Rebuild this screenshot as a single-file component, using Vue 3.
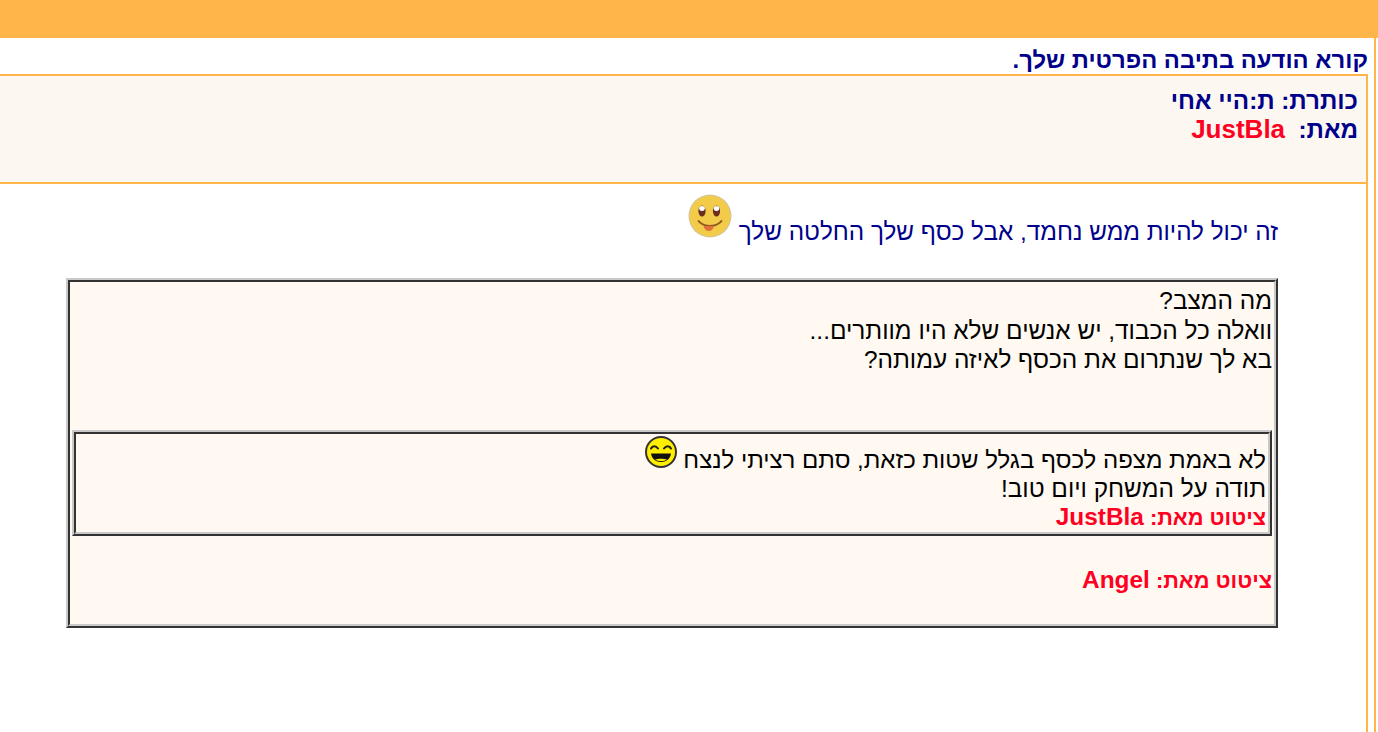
<script setup>
</script>

<template>
  <div class="page" dir="rtl">
    <div class="topbar"></div>
    <div class="outer">
      <h1 class="title">קורא הודעה בתיבה הפרטית שלך.</h1>
      <div class="inner">
        <div class="panel">
          <div class="meta">כותרת: ת:היי אחי</div>
          <div class="meta">מאת:&nbsp; <span class="red">JustBla</span></div>
        </div>
        <div class="content">
          <p class="message">
            זה יכול להיות ממש נחמד, אבל כסף שלך החלטה שלך
            <svg class="smile" width="44" height="44" viewBox="0 0 44 44" aria-hidden="true">
              <defs>
                <filter id="soft" x="-10%" y="-10%" width="120%" height="120%">
                  <feGaussianBlur stdDeviation="0.7" />
                </filter>
              </defs>
              <circle cx="22" cy="22" r="21.500" fill="#cfc6a8" filter="url(#soft)" />
              <circle cx="22" cy="22" r="20.500" fill="#f2cb48" />
              <ellipse cx="14" cy="17" rx="3.600" ry="5.500" fill="#6b2f22" />
              <ellipse cx="28.500" cy="17" rx="3.600" ry="5.500" fill="#6b2f22" />
              <ellipse cx="14" cy="14.500" rx="2.800" ry="2.400" fill="#fff" />
              <ellipse cx="28.500" cy="14.500" rx="2.800" ry="2.400" fill="#fff" />
              <path d="M10.500 27l1.500 1.500c3 2.500 6.500 3.500 10 3.500s7-1 10-3.500l1.500-1.500" fill="none" stroke="#8f5a20" stroke-width="1.800" stroke-linecap="round" />
              <path d="M15.500 32h10.500c-.8 3.500-3 5-5.200 5s-4.500-1.500-5.300-5z" fill="#e0703a" />
            </svg>
          </p>
          <div class="quote-outer">
            <div class="quote-cell">
              <div class="lines">
                מה המצב?<br />
                וואלה כל הכבוד, יש אנשים שלא היו מוותרים...<br />
                בא לך שנתרום את הכסף לאיזה עמותה?
              </div>
              <div class="nested-outer">
                <div class="nested-cell">
                  <div class="lines">
                    <span class="tight">לא באמת מצפה לכסף בגלל שטות כזאת, סתם רציתי לנצח</span>
                    <svg class="laugh" width="32" height="32" viewBox="0 0 32 32" aria-hidden="true">
                      <circle cx="16" cy="16" r="15" fill="#ffee00" stroke="#333" stroke-width="2" />
                      <path d="M6 12.500c1.500-3 5-3 7 0M19 12.500c2-3 5.500-3 7 0" fill="none" stroke="#222" stroke-width="2" stroke-linecap="round" />
                      <path d="M6 17.500h20c-.5 5-5 8.500-10 8.500S6.500 22.500 6 17.500z" fill="#111" />
                      <path d="M10 23.500c3.500 2 8.500 2 12 0c-3-1-9-1-12 0z" fill="#ffee00" />
                    </svg>
                    <br />
                    תודה על המשחק ויום טוב!
                  </div>
                  <div class="cite nested">ציטוט מאת: <span class="latin">JustBla</span></div>
                </div>
              </div>
              <div class="cite last">ציטוט מאת: <span class="latin">Angel</span></div>
            </div>
          </div>
        </div>
      </div>
    </div>
  </div>
</template>

<style>
html, body { margin: 0; padding: 0; background: #fff; overflow: hidden; }
</style>

<style scoped>
.page {
  height: 732px;
  overflow: hidden;
  font-family: "Liberation Sans", Arial, sans-serif;
  background: #fff;
}
.topbar { height: 38px; background: #ffb54a; }
.outer {
  height: 694px;
  margin-right: 2px;
  width: 1376px;
  box-sizing: border-box;
  border-right: 2px solid #ffb54a;
  overflow: hidden;
}
.title {
  margin: 0;
  height: 36px;
  box-sizing: border-box;
  padding: 7px 6px 0 0;
  font-size: 23.8px;
  line-height: 29px;
  font-weight: bold;
  color: #00008b;
}
.inner {
  width: 1368px;
  margin-right: 6px;
  height: 658px;
  box-sizing: border-box;
  border-right: 2px solid #ffb54a;
}
.panel {
  height: 110px;
  box-sizing: border-box;
  border-top: 2px solid #ffb54a;
  border-bottom: 2px solid #ffb54a;
  background: #fcf8f1;
  padding: 10px 8px 0 0;
  font-size: 24.2px;
  line-height: 29px;
  font-weight: bold;
  color: #00008b;
}
.red { color: #ff0022; font-size: 26px; }
.content { padding: 0 88px 0 66px; }
.message {
  margin: 0;
  height: 94px;
  padding-top: 10px;
  box-sizing: border-box;
  font-size: 24.3px;
  line-height: 44px;
  color: #00008b;
}
.smile { vertical-align: 2px; }
.quote-outer {
  height: 350px;
  box-sizing: border-box;
  border: 2px solid;
  border-color: #c9c9c9 #333 #333 #c9c9c9;
}
.quote-cell {
  height: 346px;
  box-sizing: border-box;
  border: 2px solid;
  border-color: #333 #c9c9c9 #c9c9c9 #333;
  background: #fff9f1;
  padding: 4px 2px 0 2px;
  color: #000;
  font-size: 24.4px;
  line-height: 29.5px;
}
.nested-outer {
  margin-top: 55px;
  height: 106px;
  box-sizing: border-box;
  border: 2px solid;
  border-color: #c9c9c9 #333 #333 #c9c9c9;
}
.nested-cell {
  height: 102px;
  box-sizing: border-box;
  border: 2px solid;
  border-color: #333 #c9c9c9 #c9c9c9 #333;
  padding: 2px 2px 0 4px;
}
.tight { font-size: 24px; }
.laugh { vertical-align: 0; margin-right: 6px; }
.cite {
  font-size: 21.8px;
  line-height: 24px;
  font-weight: bold;
  color: #ff0022;
}
.cite.nested { margin-top: 1px; }
.latin { font-size: 24.4px; }
.cite.last { margin-top: 32px; }
</style>
